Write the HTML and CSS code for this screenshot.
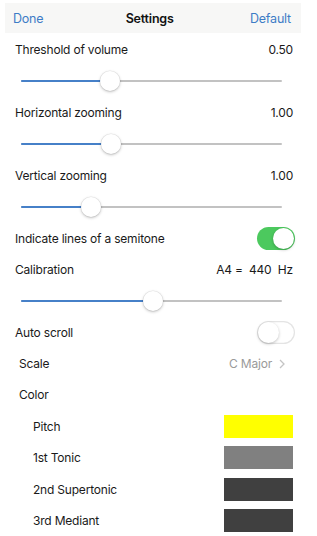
FILE: index.html
```html
<!DOCTYPE html>
<html>
<head>
<meta charset="utf-8">
<link rel="stylesheet" href="styles.css">
</head>
<body>
<div class="page">
  <div class="navbar">
    <span class="nav-btn">Done</span>
    <span class="nav-title">Settings</span>
    <span class="nav-btn">Default</span>
  </div>
  <div class="list">
    <div class="row"><span>Threshold of volume</span><span>0.50</span></div>
    <div class="row slider-row"><div class="slider"><div class="fill" style="width:89px"></div><div class="thumb" style="left:89px"></div></div></div>
    <div class="row"><span>Horizontal zooming</span><span>1.00</span></div>
    <div class="row slider-row"><div class="slider"><div class="fill" style="width:90px"></div><div class="thumb" style="left:90px"></div></div></div>
    <div class="row"><span>Vertical zooming</span><span>1.00</span></div>
    <div class="row slider-row"><div class="slider"><div class="fill" style="width:70px"></div><div class="thumb" style="left:70px"></div></div></div>
    <div class="row"><span>Indicate lines of a semitone</span><span class="toggle on"><span class="knob"></span></span></div>
    <div class="row"><span>Calibration</span><span class="calib">A4 =&nbsp; 440&nbsp; Hz</span></div>
    <div class="row slider-row"><div class="slider"><div class="fill" style="width:132px"></div><div class="thumb" style="left:132px"></div></div></div>
    <div class="row"><span>Auto scroll</span><span class="toggle"><span class="knob"></span></span></div>
    <div class="row sub"><span>Scale</span><span class="detail">C Major <svg class="chev" width="6" height="10" viewBox="0 0 6 10"><path d="M1 1 L5 5 L1 9" fill="none" stroke="#c4c4c4" stroke-width="1.3"/></svg></span></div>
    <div class="row sub"><span>Color</span></div>
    <div class="row color"><span>Pitch</span><span class="swatch yellow"></span></div>
    <div class="row color"><span>1st Tonic</span><span class="swatch gray"></span></div>
    <div class="row color"><span>2nd Supertonic</span><span class="swatch dark"></span></div>
    <div class="row color"><span>3rd Mediant</span><span class="swatch dark"></span></div>
  </div>
</div>
</body>
</html>
```
FILE: styles.css
```css
html, body {
  margin: 0;
  padding: 0;
  background: #ffffff;
}
.page {
  width: 317px;
  height: 536px;
  overflow: hidden;
  font-family: Inter, "Noto Sans", sans-serif;
  font-size: 12px;
  letter-spacing: -0.2px;
  color: #1a1a1a;
  padding-top: 3px;
  box-sizing: border-box;
}
.navbar {
  margin: 0 16px 0 5px;
  height: 30px;
  background: #f7f7f6;
  display: flex;
  align-items: center;
  justify-content: space-between;
  padding: 0 10px 0 8px;
  box-sizing: border-box;
}
.nav-btn {
  color: #3d7cc6;
  font-size: 12.5px;
}
.nav-title {
  font-weight: 600;
  font-size: 12.5px;
  color: #111;
  margin-left: 6px;
}
.list {
  display: flex;
  flex-direction: column;
  padding: 1px 24px 0 15px;
}
.row {
  height: 31.4px;
  display: flex;
  align-items: center;
  justify-content: space-between;
  flex-shrink: 0;
}
.row.sub {
  padding-left: 4px;
  padding-right: 8px;
}
.row.color {
  padding-left: 18px;
  margin-right: 0;
}
.slider-row {
  padding: 0 11px 0 6px;
}
.slider {
  position: relative;
  flex: 1;
  height: 2px;
  background: #c2c2c2;
  border-radius: 1px;
}
.fill {
  position: absolute;
  left: 0;
  top: 0;
  height: 2px;
  background: #4680c8;
  border-radius: 1px;
}
.thumb {
  position: absolute;
  top: -9px;
  width: 20px;
  height: 20px;
  margin-left: -10px;
  border-radius: 50%;
  background: #fff;
  box-shadow: 0 1px 3px rgba(0,0,0,0.25), 0 0 0 0.5px rgba(0,0,0,0.08);
}
.toggle {
  position: relative;
  width: 38px;
  height: 23px;
  border-radius: 12px;
  background: #fff;
  box-shadow: inset 0 0 0 1.2px #e4e4e4;
  margin-right: -2px;
}
.toggle .knob {
  position: absolute;
  top: 1px;
  left: 1px;
  width: 21px;
  height: 21px;
  border-radius: 50%;
  background: #fff;
  box-shadow: 0 1px 3px rgba(0,0,0,0.25);
}
.toggle.on {
  background: #4cc95e;
  box-shadow: none;
}
.toggle.on .knob {
  left: 16px;
}
.detail {
  color: #9a9a9a;
  display: flex;
  align-items: center;
  gap: 7px;
}
.swatch {
  width: 69px;
  height: 23px;
}
.yellow { background: #ffff00; }
.gray { background: #808080; }
.dark { background: #404040; }
```
